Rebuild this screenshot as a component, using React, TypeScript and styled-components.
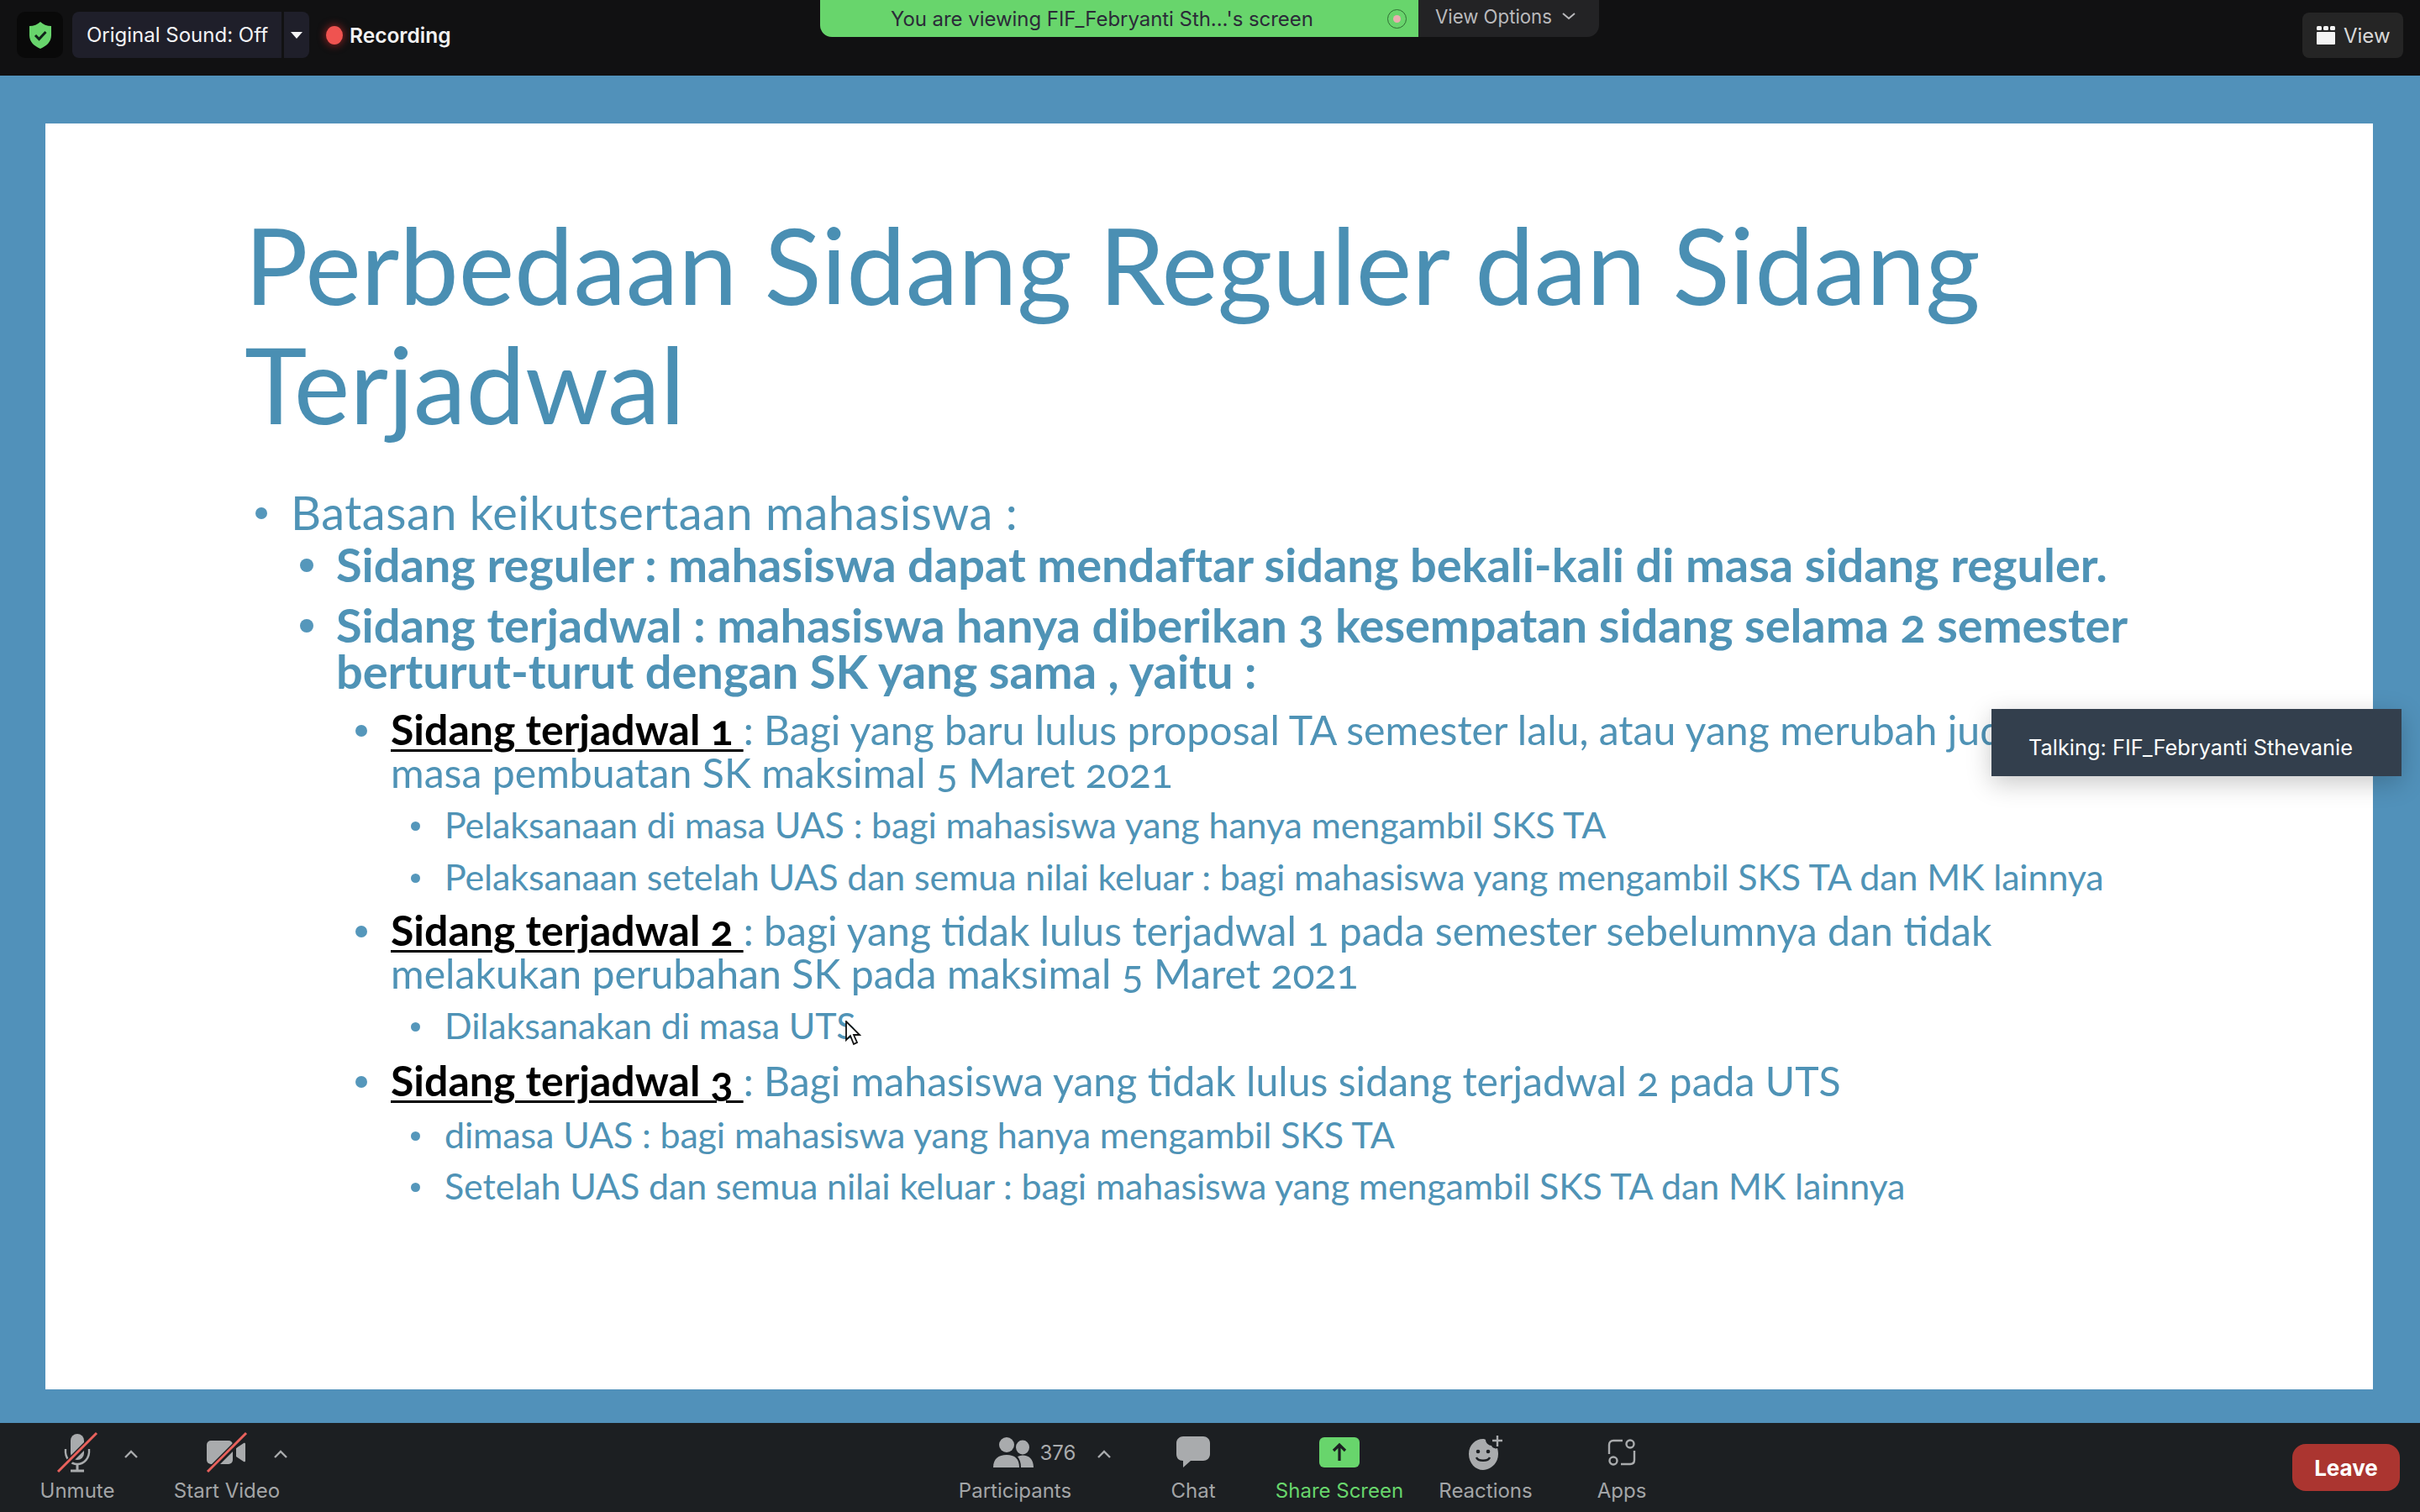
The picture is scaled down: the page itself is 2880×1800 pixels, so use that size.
import React, { FC, ReactNode } from 'react';
import styled, { createGlobalStyle } from 'styled-components';

const GlobalStyle = createGlobalStyle`
  html, body {
    margin: 0;
    padding: 0;
    background: #111112;
  }
  * {
    box-sizing: border-box;
  }
`;

const UI_FONT = `Inter, "Liberation Sans", sans-serif`;

const Page = styled.div`
  position: relative;
  display: flex;
  flex-direction: column;
  width: 2880px;
  height: 1800px;
  overflow: hidden;
  font-family: ${UI_FONT};
`;

/* top bar */
const TopBar = styled.header`
  display: flex;
  align-items: flex-start;
  flex: 0 0 90px;
  height: 90px;
  padding-left: 20px;
  padding-right: 20px;
  background: #111112;
`;

const ShieldBox = styled.div`
  display: flex;
  align-items: center;
  justify-content: center;
  width: 55px;
  height: 55px;
  margin-top: 14px;
  border-radius: 10px;
  background: #090909;
`;

const SoundButton = styled.div`
  display: flex;
  align-items: center;
  width: 249px;
  height: 55px;
  margin: 14px 0 0 11px;
  padding-left: 17px;
  border-radius: 8px 0 0 8px;
  background: #1f1f2a;
  color: #f4f4f6;
  font-size: 24px;
  white-space: nowrap;
`;

const SoundCaret = styled.div`
  display: flex;
  align-items: center;
  justify-content: center;
  width: 30px;
  height: 55px;
  margin: 14px 0 0 3px;
  border-radius: 0 8px 8px 0;
  background: #1f1f2a;

  &::after {
    content: '';
    border-left: 7px solid transparent;
    border-right: 7px solid transparent;
    border-top: 8px solid #f4f4f6;
  }
`;

const RecordingDot = styled.div`
  width: 20px;
  height: 22px;
  margin: 31px 0 0 20px;
  border-radius: 50%;
  background: #ef5350;
  box-shadow: 0 0 8px 2px rgba(190, 40, 40, 0.55);
`;

const RecordingLabel = styled.div`
  width: 122px;
  margin: 25px 0 0 8px;
  color: #f2f2f2;
  font-size: 24.5px;
  line-height: 34px;
  font-weight: 600;
  white-space: nowrap;
`;

const Banner = styled.div`
  display: flex;
  align-items: center;
  width: 712px;
  height: 44px;
  margin-left: 438px;
  padding-left: 84px;
  border-bottom-left-radius: 14px;
  background: #68d56c;
  color: #2b2b38;
  font-size: 24px;
  letter-spacing: -0.05px;
  white-space: nowrap;
`;

const BannerRing = styled.div`
  display: flex;
  align-items: center;
  justify-content: center;
  width: 23px;
  height: 23px;
  margin-left: 88px;
  border: 1.5px solid #2f6d33;
  border-radius: 50%;

  &::after {
    content: '';
    width: 9px;
    height: 9px;
    border-radius: 50%;
    background: #e9aeb0;
  }
`;

const ViewOptions = styled.div`
  display: flex;
  align-items: center;
  gap: 11px;
  width: 215px;
  height: 44px;
  padding: 0 0 6px 20px;
  border-bottom-right-radius: 14px;
  background: #232325;
  color: #b9b9bc;
  font-size: 22.2px;
  white-space: nowrap;
`;

const ViewButton = styled.div`
  display: flex;
  align-items: center;
  gap: 10px;
  width: 120px;
  height: 54px;
  margin: 15px 0 0 auto;
  padding-left: 17px;
  border-radius: 8px;
  background: #252525;
  color: #d8d8d8;
  font-size: 24px;
`;

/* shared slide */
const Stage = styled.main`
  flex: 1;
  display: flex;
  min-height: 0;
  padding: 57px 56px 40px 54px;
  background: #5191ba;
`;

const Slide = styled.section`
  flex: 1;
  padding: 97px 0 0 240px;
  background: #ffffff;
  color: #4f93b6;
  font-family: Lato, "Open Sans", sans-serif;
  font-variant-numeric: oldstyle-nums;
`;

const Title = styled.h1`
  margin: 0 0 52px -3px;
  color: #4a8fb3;
  font-size: 126px;
  line-height: 142px;
  letter-spacing: -0.16px;
  font-weight: 400;
`;

const levels = {
  1: { left: 52, size: 56, line: 60, top: 0, weight: 400, spacing: 0.5, dot: 14 },
  2: { left: 106, size: 56, line: 55, top: 4, weight: 700, spacing: -0.05, dot: 16 },
  3: { left: 171, size: 48.2, line: 51, top: 17, weight: 400, spacing: 0, dot: 14 },
  4: { left: 235, size: 43, line: 50, top: 12, weight: 400, spacing: -0.14, dot: 11 },
};

type Level = keyof typeof levels;

const Item = styled.div<{ $level: Level; $top?: number }>`
  position: relative;
  margin-top: ${(p) => p.$top ?? levels[p.$level].top}px;
  padding-left: ${(p) => levels[p.$level].left}px;
  font-size: ${(p) => levels[p.$level].size}px;
  line-height: ${(p) => levels[p.$level].line}px;
  font-weight: ${(p) => levels[p.$level].weight};
  letter-spacing: ${(p) => levels[p.$level].spacing}px;
  white-space: nowrap;

  &::before {
    content: '';
    position: absolute;
    left: ${(p) => levels[p.$level].left - 35 - levels[p.$level].dot / 2}px;
    top: ${(p) => levels[p.$level].line / 2 - levels[p.$level].dot / 2 + 1}px;
    width: ${(p) => levels[p.$level].dot}px;
    height: ${(p) => levels[p.$level].dot}px;
    border-radius: 50%;
    background: #5597bb;
  }
`;

const Term = styled.span`
  color: #000000;
  font-size: 50px;
  font-weight: 700;
  text-decoration: underline;
  text-decoration-thickness: 3px;
  text-underline-offset: 5px;
`;

const Cursor = styled.svg`
  position: absolute;
  left: 711px;
  top: 19px;
`;

const TalkingTip = styled.div`
  position: absolute;
  left: 2370px;
  top: 844px;
  display: flex;
  align-items: center;
  width: 488px;
  height: 80px;
  padding: 10px 0 0 44px;
  background: #333f4d;
  color: #ffffff;
  font-size: 25.4px;
  white-space: nowrap;
  box-shadow: 0 8px 30px rgba(0, 0, 0, 0.22);
`;

/* bottom toolbar */
const BottomBar = styled.footer`
  display: flex;
  flex: 0 0 106px;
  height: 106px;
  background: #1c1f22;
`;

const LeftTools = styled.div`
  display: flex;
  width: 1092px;
  padding-left: 3px;
`;

const CenterTools = styled.div`
  display: flex;
`;

const Tool = styled.div<{ $width: number }>`
  position: relative;
  display: flex;
  flex-direction: column;
  align-items: center;
  width: ${(p) => p.$width}px;
  padding-top: 10px;
`;

const ToolIcon = styled.div`
  display: flex;
  align-items: center;
  justify-content: center;
  height: 50px;
`;

const ParticipantsIcon = styled(ToolIcon)`
  gap: 8px;
  margin-left: 46px;
  color: #a9abad;
  font-size: 24px;
`;

const ToolLabel = styled.div<{ $active?: boolean }>`
  margin-top: 6px;
  color: ${(p) => (p.$active ? '#68d56c' : '#a3a5a7')};
  font-size: 24px;
  line-height: 30px;
  white-space: nowrap;
`;

const ToolChevron = styled.svg<{ $left: number }>`
  position: absolute;
  left: ${(p) => p.$left}px;
  top: 31px;
`;

const LeaveButton = styled.div`
  display: flex;
  align-items: center;
  justify-content: center;
  width: 128px;
  height: 56px;
  margin: 25px 24px 0 auto;
  border-radius: 16px;
  background: #ab3530;
  color: #ffffff;
  font-size: 26px;
  font-weight: 700;
`;

const Chevron: FC<{ left: number }> = ({ left }) => (
  <ToolChevron $left={left} width="18" height="12" viewBox="0 0 18 12" fill="none">
    <path d="M2 10 9 3l7 7" stroke="#a9abad" strokeWidth="2.4" />
  </ToolChevron>
);

const Slash: FC = () => (
  <>
    <path d="M50 3 4 49" stroke="#1c1f22" strokeWidth="7" />
    <path d="M50 2 4 48" stroke="#e8615c" strokeWidth="3" />
  </>
);

const MicIcon: FC = () => (
  <svg width="54" height="50" viewBox="0 0 54 50" fill="none">
    <rect x="19" y="3" width="16" height="31" rx="8" fill="#a9abad" />
    <path d="M13 21c-1 11 6 18 14 18s15-7 14-18" stroke="#a9abad" strokeWidth="2.4" />
    <path d="M27 39v7M19 47h16" stroke="#a9abad" strokeWidth="3" />
    <Slash />
  </svg>
);

const VideoIcon: FC = () => (
  <svg width="54" height="50" viewBox="0 0 54 50" fill="none">
    <rect x="3" y="11" width="31" height="28" rx="5" fill="#a9abad" />
    <path d="M38 20 47 14c1-.7 2 0 2 1v20c0 1-1 1.700-2 1l-9-6z" fill="#a9abad" />
    <Slash />
  </svg>
);

const PeopleIcon: FC = () => (
  <svg width="48" height="36" viewBox="0 0 48 36" fill="#a9abad">
    <ellipse cx="16" cy="9" rx="9" ry="9" />
    <ellipse cx="35" cy="12" rx="8" ry="8.500" />
    <path d="M0 36c0-10 6-15 16-15s15 5 15 15z" />
    <path d="M33 36c0-6-1.500-10-4-13 2-1 4-1.500 6-1.500 8 0 13 5 13 14.500z" />
  </svg>
);

const ChatIcon: FC = () => (
  <svg width="40" height="38" viewBox="0 0 40 38" fill="#a9abad">
    <path d="M8 0h24c4 0 8 3 8 8v13c0 5-4 8-8 8H17l-9 8v-8c-5 0-8-3-8-8V8c0-5 4-8 8-8z" />
  </svg>
);

const ShareIcon: FC = () => (
  <svg width="48" height="36" viewBox="0 0 48 36" fill="none">
    <rect width="48" height="36" rx="6" fill="#68d56c" />
    <path d="M24 28V10M17 16l7-7 7 7" stroke="#1c1f22" strokeWidth="3.200" />
  </svg>
);

const ReactionsIcon: FC = () => (
  <svg width="42" height="42" viewBox="0 0 42 42" fill="none">
    <path d="M18 5c-9 0-17 7-17 18s8 19 17 19 18-8 18-19c0-3-.5-5-1-7-2 1-6 0-7-3-3 0-7-3-7-7-1-1-2-1-3-1z" fill="#a9abad" />
    <circle cx="12" cy="20" r="2.300" fill="#1c1f22" />
    <circle cx="24" cy="20" r="2.300" fill="#1c1f22" />
    <path d="M10 27c2 5 14 5 16 0" stroke="#1c1f22" strokeWidth="2.400" />
    <path d="M35 1v13M29 7h12" stroke="#a9abad" strokeWidth="2.400" />
  </svg>
);

const AppsIcon: FC = () => (
  <svg width="34" height="34" viewBox="0 0 34 34" fill="none" stroke="#a9abad" strokeWidth="2.400">
    <path d="M2 19V8c0-3 2-5 5-5h11" />
    <path d="M32 15v11c0 3-2 5-5 5H16" />
    <circle cx="27" cy="7" r="4.500" />
    <circle cx="7" cy="27" r="4.500" />
  </svg>
);

const ToolEntry: FC<{ width: number; label: string; active?: boolean; icon: ReactNode; children?: ReactNode }> = ({
  width,
  label,
  active,
  icon,
  children
}) => (
  <Tool $width={width}>
    {icon}
    <ToolLabel $active={active}>{label}</ToolLabel>
    {children}
  </Tool>
);

const App: FC = () => (
  <Page>
    <GlobalStyle />
    <TopBar>
      <ShieldBox>
        <svg width="26" height="32" viewBox="0 0 26 32">
          <path d="M13 0c3 3 8 5 13 5v11c0 8-6 13-13 16C6 29 0 24 0 16V5c5 0 10-2 13-5z" fill="#68d56c" />
          <path d="m7 16 4.500 4.500L19.500 12" fill="none" stroke="#10231a" strokeWidth="3" />
        </svg>
      </ShieldBox>
      <SoundButton>Original Sound: Off</SoundButton>
      <SoundCaret />
      <RecordingDot />
      <RecordingLabel>Recording</RecordingLabel>
      <Banner>
        You are viewing FIF_Febryanti Sth...'s screen
        <BannerRing />
      </Banner>
      <ViewOptions>
        View Options
        <svg width="18" height="10" viewBox="0 0 18 10" fill="none">
          <path d="m2 2 7 6 7-6" stroke="#b9b9bc" strokeWidth="2" />
        </svg>
      </ViewOptions>
      <ViewButton>
        <svg width="22" height="22" viewBox="0 0 22 22" fill="#f4f4f4">
          <rect x="0" y="0" width="6" height="5" rx="1.500" />
          <rect x="8" y="0" width="6" height="5" rx="1.500" />
          <rect x="16" y="0" width="6" height="5" rx="1.500" />
          <rect x="0" y="7" width="22" height="15" rx="1" />
        </svg>
        View
      </ViewButton>
    </TopBar>

    <Stage>
      <Slide>
        <Title>
          Perbedaan Sidang Reguler dan Sidang
          <br />
          Terjadwal
        </Title>
        <Item $level={1}>Batasan keikutsertaan mahasiswa :</Item>
        <Item $level={2}>Sidang reguler : mahasiswa dapat mendaftar sidang bekali-kali di masa sidang reguler.</Item>
        <Item $level={2} $top={17}>
          Sidang terjadwal : mahasiswa hanya diberikan 3 kesempatan sidang selama 2 semester
          <br />
          berturut-turut dengan SK yang sama , yaitu :
        </Item>
        <Item $level={3}>
          <Term>Sidang terjadwal 1 </Term>: Bagi yang baru lulus proposal TA semester lalu, atau yang merubah judul
          <br />
          masa pembuatan SK maksimal 5 Maret 2021
        </Item>
        <Item $level={4}>Pelaksanaan di masa UAS : bagi mahasiswa yang hanya mengambil SKS TA</Item>
        <Item $level={4}>Pelaksanaan setelah UAS dan semua nilai keluar : bagi mahasiswa yang mengambil SKS TA dan MK lainnya</Item>
        <Item $level={3} $top={13}>
          <Term>Sidang terjadwal 2 </Term>: bagi yang tidak lulus terjadwal 1 pada semester sebelumnya dan tidak
          <br />
          melakukan perubahan SK pada maksimal 5 Maret 2021
        </Item>
        <Item $level={4}>
          Dilaksanakan di masa UTS
          <Cursor width="20" height="30" viewBox="0 0 20 30">
            <path d="M2 1v22l5-5 4 10 4-2-4-9h7z" fill="#fff" stroke="#111" strokeWidth="1.800" />
          </Cursor>
        </Item>
        <Item $level={3} $top={15}>
          <Term>Sidang terjadwal 3 </Term>: Bagi mahasiswa yang tidak lulus sidang terjadwal 2 pada UTS
        </Item>
        <Item $level={4} $top={14}>dimasa UAS : bagi mahasiswa yang hanya mengambil SKS TA</Item>
        <Item $level={4} $top={11}>Setelah UAS dan semua nilai keluar : bagi mahasiswa yang mengambil SKS TA dan MK lainnya</Item>
      </Slide>
    </Stage>

    <BottomBar>
      <LeftTools>
        <ToolEntry width={178} label="Unmute" icon={<ToolIcon><MicIcon /></ToolIcon>}>
          <Chevron left={144} />
        </ToolEntry>
        <ToolEntry width={178} label="Start Video" icon={<ToolIcon><VideoIcon /></ToolIcon>}>
          <Chevron left={144} />
        </ToolEntry>
      </LeftTools>
      <CenterTools>
        <ToolEntry width={232} label="Participants" icon={<ParticipantsIcon><PeopleIcon />376</ParticipantsIcon>}>
          <Chevron left={213} />
        </ToolEntry>
        <ToolEntry width={192} label="Chat" icon={<ToolIcon><ChatIcon /></ToolIcon>} />
        <ToolEntry width={156} label="Share Screen" active icon={<ToolIcon><ShareIcon /></ToolIcon>} />
        <ToolEntry width={192} label="Reactions" icon={<ToolIcon><ReactionsIcon /></ToolIcon>} />
        <ToolEntry width={132} label="Apps" icon={<ToolIcon><AppsIcon /></ToolIcon>} />
      </CenterTools>
      <LeaveButton>Leave</LeaveButton>
    </BottomBar>

    <TalkingTip>Talking: FIF_Febryanti Sthevanie</TalkingTip>
  </Page>
);

export default App;
